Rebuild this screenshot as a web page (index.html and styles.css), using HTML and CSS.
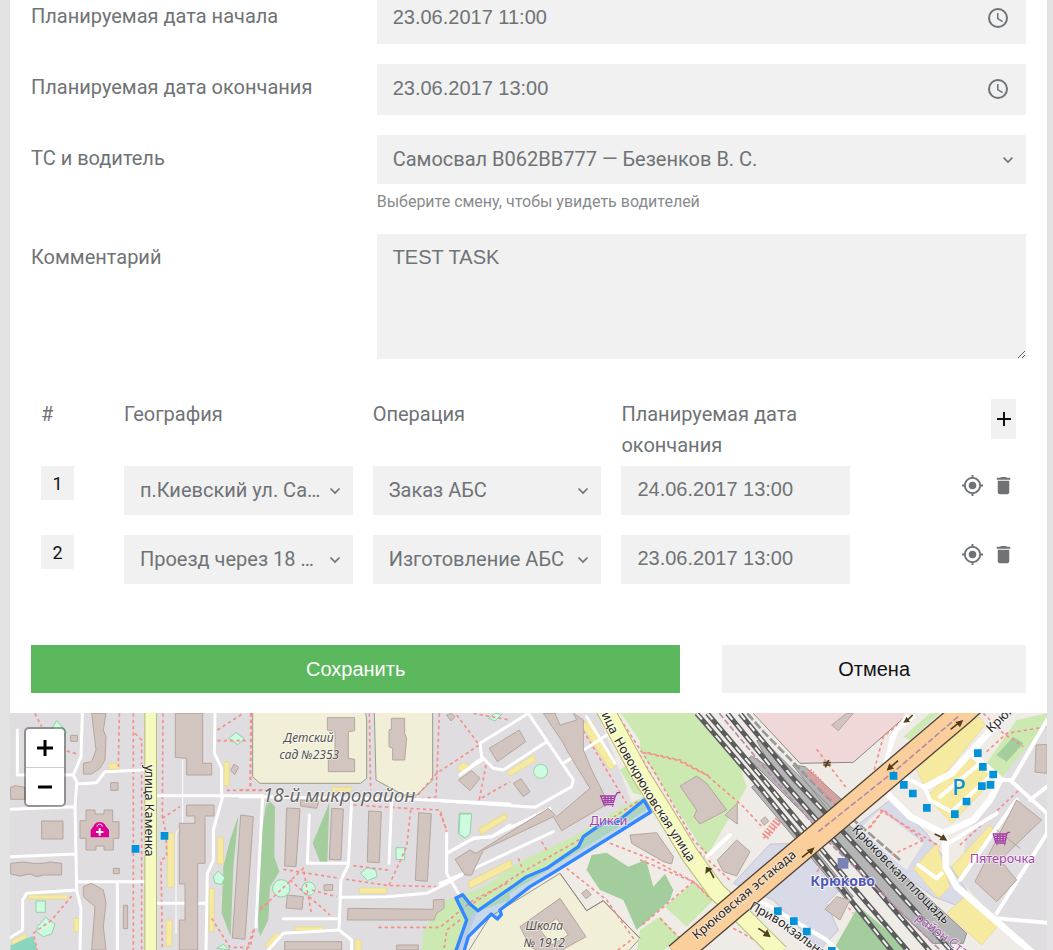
FILE: index.html
```html
<!DOCTYPE html>
<html lang="ru">
<head>
<meta charset="utf-8">
<meta name="viewport" content="width=device-width, initial-scale=1">
<title>Задание</title>
<link rel="stylesheet" href="styles.css">
</head>
<body>
<svg class="sprite" aria-hidden="true">
  <symbol id="i-clock" viewBox="0 0 24 24"><path d="M12 2a10 10 0 1 0 0 20 10 10 0 0 0 0-20zm0 18a8 8 0 1 1 0-16 8 8 0 0 1 0 16zm.5-13H11v6l5.2 3.2.8-1.3-4.5-2.7z"/></symbol>
  <symbol id="i-chevron" viewBox="0 0 12 12"><path d="M1.5 3.5 6 8l4.500-4.500" fill="none" stroke="currentColor" stroke-width="1.700"/></symbol>
  <symbol id="i-target" viewBox="0 0 24 24"><path d="M12 8a4 4 0 1 0 0 8 4 4 0 0 0 0-8zm8.940 3A8.990 8.990 0 0 0 13 3.060V1h-2v2.060A8.990 8.990 0 0 0 3.060 11H1v2h2.060A8.990 8.990 0 0 0 11 20.940V23h2v-2.060A8.990 8.990 0 0 0 20.940 13H23v-2zM12 19a7 7 0 1 1 0-14 7 7 0 0 1 0 14z"/></symbol>
  <symbol id="i-trash" viewBox="0 0 24 24"><path d="M6 19c0 1.100.9 2 2 2h8c1.100 0 2-.9 2-2V7H6zM19 4h-3.500l-1-1h-5l-1 1H5v2h14z"/></symbol>
</svg>
<main class="page">
  <form class="task">
    <div class="row">
      <label class="label" for="start">Планируемая дата начала</label>
      <div class="field">
        <div class="control"><input class="input" id="start" type="text" value="23.06.2017 11:00"><svg class="clock"><use href="#i-clock"/></svg></div>
      </div>
    </div>
    <div class="row">
      <label class="label" for="end">Планируемая дата окончания</label>
      <div class="field">
        <div class="control"><input class="input" id="end" type="text" value="23.06.2017 13:00"><svg class="clock"><use href="#i-clock"/></svg></div>
      </div>
    </div>
    <div class="row">
      <label class="label" for="car">ТС и водитель</label>
      <div class="field">
        <div class="control"><select class="select" id="car"><option>Самосвал B062BB777 — Безенков В. С.</option></select><svg class="chevron"><use href="#i-chevron"/></svg></div>
        <p class="hint">Выберите смену, чтобы увидеть водителей</p>
      </div>
    </div>
    <div class="row">
      <label class="label" for="comment">Комментарий</label>
      <div class="field"><textarea class="textarea" id="comment">TEST TASK</textarea></div>
    </div>

    <table class="steps">
      <thead>
        <tr>
          <th class="col-num" scope="col">#</th>
          <th class="col" scope="col">География</th>
          <th class="col" scope="col">Операция</th>
          <th class="col" scope="col">Планируемая дата окончания</th>
          <th class="col-actions"><button class="add" type="button" aria-label="Добавить"><svg viewBox="0 0 14 14"><path d="M7 0v14M0 7h14"/></svg></button></th>
        </tr>
      </thead>
      <tbody>
        <tr>
          <td><button class="num" type="button">1</button></td>
          <td><div class="control"><select class="select" aria-label="География 1"><option>п.Киевский ул. Са…</option></select><svg class="chevron"><use href="#i-chevron"/></svg></div></td>
          <td><div class="control"><select class="select" aria-label="Операция 1"><option>Заказ АБС</option></select><svg class="chevron"><use href="#i-chevron"/></svg></div></td>
          <td><input class="input input-small" type="text" aria-label="Дата окончания 1" value="24.06.2017 13:00"></td>
          <td><div class="actions"><button class="icon" type="button" aria-label="Показать на карте"><svg><use href="#i-target"/></svg></button><button class="icon" type="button" aria-label="Удалить"><svg><use href="#i-trash"/></svg></button></div></td>
        </tr>
        <tr>
          <td><button class="num" type="button">2</button></td>
          <td><div class="control"><select class="select" aria-label="География 2"><option>Проезд через 18 …</option></select><svg class="chevron"><use href="#i-chevron"/></svg></div></td>
          <td><div class="control"><select class="select" aria-label="Операция 2"><option>Изготовление АБС</option></select><svg class="chevron"><use href="#i-chevron"/></svg></div></td>
          <td><input class="input input-small" type="text" aria-label="Дата окончания 2" value="23.06.2017 13:00"></td>
          <td><div class="actions"><button class="icon" type="button" aria-label="Показать на карте"><svg><use href="#i-target"/></svg></button><button class="icon" type="button" aria-label="Удалить"><svg><use href="#i-trash"/></svg></button></div></td>
        </tr>
      </tbody>
    </table>

    <div class="footer">
      <div class="cell"><button class="btn btn-save" type="submit">Сохранить</button></div>
      <div class="cell"><button class="btn" type="button">Отмена</button></div>
    </div>
  </form>

  <section class="map" aria-label="Карта">
    <svg class="tiles" viewBox="30 2139 3111 711">
      <defs>
        <path id="novo" d="M1800 2100 1920 2322 1985 2425 2070 2565 2150 2675 2220 2740 2340 2860"/>
        <path id="kam" d="M452 2100V2860"/>
        <path id="est" d="M2030 2866 2400 2552 2885 2140 2930 2100"/>
        <path id="t-novo" d="M1766 2066 1842 2222 1935 2385 2100 2640"/>
        <path id="t-pl" d="M2554 2490 2660 2600 2830 2770"/>
        <path id="t-priv" d="M2246 2726 2330 2772 2450 2860 2500 2900"/>
      </defs>

      <rect class="land" x="30" y="2139" width="3111" height="711"/>

      <!-- land cover -->
      <path class="city" d="M1790 2130H3141V2860H1380L1430 2740 1900 2420z"/>
      <path class="land" d="M3141 2165 3060 2230 3010 2340 2900 2500 2880 2640 3080 2860H3141z"/>
      <g transform="translate(0 2100)">
        <path class="wood" d="M715 348 690 420 670 500 665 640 692 710 700 500zM800 300 785 400 775 700 805 640z"/>
        <path class="play" d="M170 62l30 35-15 18-32-25zM686 115l22-17 25 18-20 18zM108 603h28v34h-28zM112 680l25-28 28 20-10 30-25 8-20-15zM640 530l15-17 20 20-10 20-20-3zM650 745l20-12 20 17z"/>
        <path class="teal" d="M32 735 98 708 112 750H32z"/>
        <path class="parking" d="M326 190h32v18h-32zM85 585h118v12H85zM222 655h15v40h-15zM502 400h20v162h-20zM498 660h18v78h-18zM672 185h15v72h-15zM652 412h18v80h-18zM628 565h14v130h-14zM35 722l42-22 3 12-42 22z"/>
      </g>
      <g transform="translate(720 2100)">
        <path class="school" d="M38 0H372L380 60V235L362 250H60L38 230zM402 0H578V240L530 285H490L408 240z"/>
        <path class="wood" d="M85 300 105 320 103 470 118 515 90 560 85 660 60 710 52 640 65 400zM268 308 218 430 240 485 262 488z"/>
        <path class="park" d="M545 760 550 690 620 600 780 545 810 560V600L700 640 640 760z"/>
        <path class="play" d="M658 340h35l-5 60-15 12-18-12zM362 520l20-18 25 8 5 20-30 12zM468 443h26v36h-26z"/>
        <circle class="play" cx="124" cy="565" r="26"/><circle class="play" cx="206" cy="566" r="20"/>
        <path class="parking" d="M275 262h60v12h-60zM358 564h82v17h-82zM165 680h85v12h-85zM75 735l35-38 10 8-33 38zM345 720h18v40h-18zM650 205l20-18 18 10-22 20zM715 385l80-45 8 15-80 50zM685 545l130-65v22l-128 65z"/>
      </g>
      <g transform="translate(1320 2100)">
        <path class="park" d="M85 590 250 480 400 410 540 325 610 290 620 330 110 640zM540 210 560 195 605 285 580 280zM535 30H760L900 200 920 260 800 470 620 150z"/>
        <path class="school" d="M75 770 150 650 360 520 440 632 490 602 600 715 550 770z"/>
        <path class="wood" d="M440 510 455 465 500 458 565 500 618 480 640 560 675 522 700 570 690 600 590 690 550 600 480 570z"/>
        <path class="park" d="M675 620 760 548 820 600 740 680zM600 690 660 650 720 715 660 760H590z"/>
        <path class="play" d="M60 342h35l-5 60-15 12-18-12zM145 55l20-15 20 3-20 20z"/><circle class="play" cx="302" cy="214" r="21"/>
        <path class="parking" d="M202 215 280 165 288 182 210 228zM420 70 455 62 525 200 510 210zM118 388 195 342 202 355 125 402zM85 545 210 480 218 500 90 565z"/>
        <path class="line" d="M360 520 440 632 490 602 600 715"/>
      </g>
      <g transform="translate(1920 2100)">
        <path class="park" d="M0 30H165L320 260 200 470 0 150z"/>
        <path class="retail" d="M335 30H800L780 65 640 187 480 190z"/>
        <path class="line" d="M340 40 480 190 640 187 790 55"/>
        <path class="zone" d="M390 432 280 550 400 600 540 750 595 690 560 610 600 570 480 430zM620 400 750 300 860 400 980 570 960 620 880 590z"/>
        <path class="wood" d="M655 618 810 750H580z"/>
      </g>
      <g transform="translate(2400 2100)">
        <path class="city" d="M180 385 240 330 370 430 320 510 270 470z"/>
        <path class="park" d="M310 110 390 40H420L330 120zM560 190 650 60 741 40 740 70 640 190 610 230z"/>
        <path class="wood" d="M590 165 640 110 670 130 620 185z"/>
        <path class="parking" d="M350 210 480 80 540 50 555 75 420 240 375 262zM380 290 500 170 570 210 570 250 455 370zM340 505 410 430 450 560 415 595zM440 640 500 585 592 680 545 735zM455 500 570 375 585 395 480 540z"/>
      </g>

      <!-- railway -->
      <g transform="translate(1920 2100)">
        <path class="platform" d="M350 122 372 122 600 350 980 700 970 730 880 730 700 560 500 350 325 175 335 168 400 210zM335 262 350 250 520 440 640 590 620 600zM458 195 495 200 640 330 580 350z"/>
        <g class="rail">
          <path d="M170 40 350 250 600 560 760 760"/><path d="M202 40 380 250 630 550 810 760"/>
          <path d="M262 40 430 245 660 510 875 760"/><path d="M300 40 460 235 720 515 940 760"/>
        </g>
        <g class="rail-gap">
          <path d="M170 40 350 250 600 560 760 760"/><path d="M202 40 380 250 630 550 810 760"/>
          <path d="M262 40 430 245 660 510 875 760"/><path d="M300 40 460 235 720 515 940 760"/>
        </g>
        <path class="side-track" d="M322 40 370 95 560 290 780 480"/>
        <path class="border" d="M238 40 400 235 570 430 900 750"/>
      </g>

      <!-- footpaths -->
      <g class="foot">
        <g transform="translate(0 2100)">
          <path d="M105 40 125 80M358 40 355 200M400 40V750M405 100 425 120V750M489 40 487 350 498 400 500 470 483 480 487 750M487 355 540 320M652 90 730 40M652 122H745M752 40V268M680 271H800M635 655 690 742H750L765 680M215 588 155 660 100 700 112 750M200 153 235 163M780 625 810 605"/>
        </g>
        <g transform="translate(720 2100)">
          <path d="M35 40 30 268M0 270H70M388 40 392 270M598 40 588 290 520 300M650 45 718 135 590 220 525 295M700 40 810 60M738 195 718 298 810 245M340 315 500 325 600 330 620 395M512 330 500 440 445 560M130 508 300 535 440 556 590 560M340 497 445 510M60 630 190 505 215 645M150 540 270 645M215 570 290 590M415 682H600L700 600 810 545M660 660 620 690 612 750M40 690 20 750"/>
        </g>
        <g transform="translate(1320 2100)">
          <path d="M420 75 500 210 560 310M530 40 640 210 760 420 810 470M622 158 720 180 810 230M100 610 240 520 400 430 600 300M510 430 640 480 760 545 810 590M380 505 500 600 580 715 520 760M760 545 600 680M660 655 725 720M305 425 320 450M235 475 245 500M0 340 20 390"/>
        </g>
        <g transform="translate(1920 2100)">
          <path d="M10 158 110 180 200 225 310 320 370 385M0 165 150 430 275 545M0 480 160 545 215 600M530 148 620 265M790 60 730 110 700 220M685 385 730 330 850 420M730 330 685 390M850 420 755 465M600 595 640 640M530 515 545 500M280 685 400 750M370 415 425 365"/>
        </g>
        <g transform="translate(2400 2100)"><path d="M550 40 610 100 670 140M560 155 620 100 741 80M480 435 655 272M240 330 420 440"/></g>
      </g>
      <g transform="translate(1920 2100)"><path class="steps-path" d="M505 215 590 305M375 410 415 360"/></g>

      <!-- local roads -->
      <g class="road">
        <g transform="translate(0 2100)">
          <path d="M247 40 243 170 220 225 233 252 290 248 315 215 430 210M52 90V225H220M230 250 225 320 32 328M225 320 230 570 80 580 68 600V690L32 712M32 470 225 462M230 545H435M352 545V750M230 570 243 625 240 750M645 40 643 160 665 205V290M470 287H790M668 290 640 390V480L622 520 618 750M470 610H615"/>
          <path d="M548 180V370L528 400V700" stroke-width="3"/>
        </g>
        <g transform="translate(720 2100)">
          <path d="M0 290H65L520 298 810 312M68 290 48 680M335 300 325 495 303 540 297 690 130 700 85 750M208 345 202 490H325M455 300 447 490M130 656H297M297 690 335 720V750M300 592 440 590 560 580 630 545 665 525M620 400V520L655 580M620 460 700 415 755 410 810 375M665 220 730 178"/>
        </g>
        <g transform="translate(1320 2100)">
          <path d="M0 302 285 322 395 260 400 240 265 40 120 130 125 170 160 205 190 210 320 125M370 190 500 105M440 50 525 190M60 225 120 178M0 550 60 525 340 395M20 460 100 415 155 410 330 325"/>
        </g>
        <g transform="translate(1920 2100)">
          <path d="M800 50 755 110 735 215M200 470 270 405M340 590 560 720 600 760" stroke-width="12"/>
        </g>
        <g transform="translate(2400 2100)">
          <path d="M340 50 290 90 255 190M250 200 330 240 375 262 455 220 600 60M270 290 330 350 430 400 520 360 570 300 600 240 520 165M430 440 590 340M437 420V500L470 560 700 760M600 240 630 240 741 340V400L590 640M590 655 741 668M640 235 741 60M690 300 741 260M375 265 390 300 455 335 575 225M355 495 410 535 425 520M420 290 540 190M480 540 650 300" stroke-width="12"/>
          <path d="M250 270 330 350 430 400 520 360 570 300 600 240 520 165M437 420V500L470 560 700 760M375 262 455 220 600 60" stroke-width="20"/>
        </g>
      </g>

      <!-- buildings -->
      <g class="bld">
        <g transform="translate(0 2100)">
          <path d="M275 40H318L310 90 318 110 315 180 300 205 275 222H250V190L275 185 288 150zM526 40H608V190H635V225H560V175L526 172zM212 106h20v18h-20zM332 248h22v23h-22zM32 262 45 257 75 262V298H32zM125 363h64v54h-64zM258 330 285 330V342H312V330H338V365H357V415H340V450H312V438H288V450H258V415H240V362H258zM32 490 70 486 100 490 130 490 150 486 185 490V525H130L110 530 90 522 60 528 32 522zM340 505h18v16h-18zM250 560 275 550 310 570 318 610 310 680 318 750H275L285 620 250 590zM370 616h13v70h-13zM560 315H642V348H615V490H593V750H538V660H555V552H538V370H585V348H560zM722 345 760 350 735 718 697 714zM702 192l14 10-12 22-12-12z"/>
        </g>
        <g transform="translate(720 2100)">
          <path d="M262 53H344V92L325 95V175L344 178V215H265V178L285 170V95L262 90zM454 55H494V100L500 115 494 180H458V145L447 140V90L454 88zM140 324 180 326 168 500 134 498zM182 300 236 305 230 325 182 318zM275 325 310 327 303 480 268 478zM386 333 424 335 418 488 382 486zM536 338 574 341 562 544 526 541zM142 585 190 590 186 628 138 624zM252 555 278 553V571H252zM324 625 580 628V600L612 598V625L590 640 582 660H322zM134 725H305V750H134zM470 735H535V750H470zM620 45l15-5 10 10-12 13zM655 240 695 212 720 235 690 272z"/>
        </g>
        <g transform="translate(1320 2100)">
          <path d="M148 145 238 90 257 125 172 185zM220 250 243 236 270 275 250 290zM310 40 345 40 360 75 410 60 400 40 430 60 430 150 455 210 505 310 365 392 340 350 130 450 95 525 75 525 45 478 90 450 108 460 325 325 350 350 450 265 410 200 380 150 370 130zM570 405 650 398 700 470 695 492 670 485 575 430zM720 258 770 228 800 250 860 330 780 372 762 350 770 330zM425 580l15-12 14 16-16 12z"/>
          <path fill-rule="evenodd" d="M240 680 360 595 438 710 330 770 270 740zM300 690 350 655 385 705 335 735z"/>
        </g>
        <g transform="translate(1920 2100)">
          <path d="M255 345 292 310 292 372zM232 480 290 420 330 455 290 528 250 515zM362 362l14-12 10 14-14 12zM575 75 620 40H640L595 92zM555 628 590 590 630 600 600 660z"/>
        </g>
        <g transform="translate(2400 2100)"><path d="M525 545 650 300 725 360 600 480 650 540 590 605zM708 135 741 133V220L705 216zM590 390 660 445"/></g>
      </g>

      <!-- main roads -->
      <use class="yellow-case" href="#kam" stroke-width="38"/><use class="yellow" href="#kam" stroke-width="32"/>
      <use class="yellow-case" href="#novo" stroke-width="56"/><use class="yellow" href="#novo" stroke-width="50"/>
      <use class="orange-case" href="#est"/><use class="orange" href="#est"/>
      <path class="border" d="M2455 2495 2700 2300 2880 2145"/>
      <g class="arrow">
        <path d="M2406 2572 2436 2548M2694 2282 2664 2308M2852 2188 2882 2164M2142 2634 2128 2608M2275 2785 2305 2805M2804 2502 2838 2518M2738 2145 2718 2165"/>
        <path class="head" d="M2444 2542 2420 2550 2434 2564zM2660 2312 2682 2306 2668 2290zM2890 2160 2866 2166 2880 2182zM2118 2600 2138 2606 2116 2622zM2312 2812 2288 2808 2302 2788zM2842 2522 2818 2520 2830 2502zM2710 2168 2730 2166 2720 2150z"/>
        <path d="M2470 2288H2492M2470 2295H2492M2486 2280 2476 2302" stroke-width="3"/>
      </g>

      <!-- selected route area -->
      <path class="route" d="M1365 2860 1400 2760 1368 2694 1388 2684 1410 2712 1434 2732 1580 2630 1640 2605 1735 2540 1750 2510 1815 2465 1846 2470 1932 2400 1952 2436 1665 2615 1590 2660 1500 2730 1504 2744 1492 2757 1474 2742 1405 2810 1390 2860z"/>

      <!-- markers -->
      <g class="stop">
        <path d="M482 2496h23v23h-23zM395 2535h23v23h-23zM2322 2722h23v23h-23zM2370 2752h23v23h-23zM2409 2783h23v23h-23zM2484 2841h23v23h-23zM2922 2248h23v23h-23zM2937 2289h23v23h-23zM2968 2312h23v23h-23zM2960 2343h23v23h-23zM2934 2347h23v23h-23zM2888 2393h23v23h-23zM2853 2431h23v23h-23zM2669 2316h23v23h-23zM2700 2343h23v23h-23zM2727 2369h23v23h-23zM2769 2412h23v23h-23z"/>
      </g>
      <path class="station" d="M2513 2574h32v32h-32z"/>
      <path class="clinic" d="M272 2512V2490L281 2478C286 2462 312 2462 317 2478L327 2490V2512z"/>
      <path class="cross" d="M299 2485V2507M288 2496H310"/>
      <path class="handle" d="M291 2480C291 2470 307 2470 307 2480"/>
      <g class="cart">
        <g transform="translate(1800 2378)"><path d="M2 10H46L40 30H10zM46 10 52 0H60M10 30 12 36H42M8 17H44M10 24H42M15 10V30M24 10V30M33 10V30"/><circle cx="15" cy="40" r="2"/><circle cx="38" cy="40" r="2"/></g>
        <g transform="translate(2978 2498)"><path d="M2 4H42L38 25H8zM42 4 46-1H52M8 25 10 31H40M6 11H41M8 18H39M14 4V25M22 4V25M31 4V25"/><circle cx="13" cy="36" r="2"/><circle cx="36" cy="36" r="2"/></g>
      </g>

      <!-- place names -->
      <g class="name">
        <text transform="translate(436 2294) rotate(90)">улица Каменка</text>
        <text><textPath href="#t-novo" startOffset="46">улица</textPath></text>
        <text><textPath href="#t-novo" startOffset="172">Новокрюковская улица</textPath></text>
        <text transform="translate(2090 2820) rotate(-40)">Крюковская эстакада</text>
        <text><textPath href="#t-pl">Крюковская площадь</textPath></text>
        <text><textPath href="#t-priv">Привокзальная</textPath></text>
        <text transform="translate(2974 2200) rotate(-44)">Крюковская</text>
        <g class="italic">
          <text x="926" y="2225">Детский</text><text x="928" y="2277">сад №2353</text>
          <text x="1633" y="2790">Школа</text><text x="1633" y="2842">№ 1912</text>
          <text class="district" x="1017" y="2405">18-й микрорайон</text>
        </g>
        <text class="rail-name" x="2528" y="2659">Крюково</text>
        <text class="shop" x="3007" y="2590">Пятерочка</text>
        <text class="shop" x="1826" y="2475">Дикси</text>
        <text class="shop-path" transform="translate(2744 2758) rotate(37)">район Станция</text>
        <text class="park-sign" x="2877" y="2386">P</text>
      </g>
    </svg>
    <div class="zoom">
      <button class="zoom-btn" type="button" aria-label="Приблизить"><svg viewBox="0 0 16 16"><path d="M8 0v16M0 8h16"/></svg></button>
      <button class="zoom-btn" type="button" aria-label="Отдалить"><svg viewBox="0 0 16 16"><path d="M1 8h14"/></svg></button>
    </div>
  </section>
</main>
</body>
</html>
```
FILE: styles.css
```css
*, *::before, *::after { box-sizing: border-box; }
html { overflow: hidden; }
body {
  margin: 0;
  background: #e3e3e3;
  color: #6f7376;
  font: 20px/31px Roboto, "Noto Sans", sans-serif;
}
button, input, select, textarea { font: inherit; color: inherit; border: 0; border-radius: 0; margin: 0; }
.sprite { position: absolute; width: 0; height: 0; }

/* the form is shown scrolled, its first row slightly cut */
.page { margin: -7px 6px 0 10px; background: #fff; }
.task { padding-bottom: 20px; }
.row { display: grid; grid-template-columns: 1fr 2fr; margin-bottom: 20px; }
.label { padding: 8px 21px 0; }
.field { padding: 0 21px; min-width: 0; }
.control { position: relative; }
.input, .select, .textarea { display: block; width: 100%; background: #f1f1f1; padding: 0 16px; }
.input, .textarea, .btn { font-family: "Liberation Sans", Arial, sans-serif; }
.input { height: 51px; padding-bottom: 2px; }
.input-small, .select { height: 49px; }
.select { appearance: none; padding-right: 28px; text-overflow: ellipsis; }
.textarea { height: 125px; padding-top: 8px; resize: vertical; }
.clock, .chevron { position: absolute; top: 50%; transform: translateY(-50%); fill: currentColor; pointer-events: none; }
.clock { right: 16px; width: 24px; height: 24px; margin-top: -1px; }
.chevron { right: 12px; width: 12px; height: 12px; }
.hint { margin: 5px 0 0; font-size: 16px; line-height: 25px; color: #888b8e; }

.steps { width: calc(100% - 42px); margin: 40px 21px 0; table-layout: fixed; border-collapse: collapse; }
.steps th { padding: 0 10px 5px; font-weight: 400; text-align: left; vertical-align: top; }
.steps td { padding: 0 10px 20px; vertical-align: top; }
.col-num { width: 8.333%; }
.col { width: 25%; }
.add { display: grid; place-items: center; width: 25px; height: 40px; margin-left: auto; padding: 0; background: #f1f1f1; color: #111; }
.add svg { width: 14px; height: 14px; stroke: currentColor; stroke-width: 2; }
.num { display: block; width: 33px; height: 34px; padding: 0; background: #f1f1f1; color: #111; font-size: 18px; }
.actions { display: flex; justify-content: flex-end; gap: 8px; padding: 8px 1px 0 0; }
.icon { display: block; width: 23px; height: 23px; padding: 0; background: none; }
.icon svg { display: block; width: 23px; height: 23px; fill: currentColor; }

.footer { display: grid; grid-template-columns: 2fr 1fr; margin-top: 41px; }
.cell { padding: 0 21px; }
.btn { display: block; width: 100%; height: 48px; padding: 0; background: #f1f1f1; color: #111; }
.btn-save { background: #5cb85c; color: #fff; }

.map { position: relative; }
.tiles { display: block; width: 100%; }
.zoom { position: absolute; top: 14px; left: 14px; border: 2px solid rgba(0, 0, 0, .35); border-radius: 5px; background: #fff; background-clip: padding-box; }
.zoom-btn { display: grid; place-items: center; width: 38px; height: 38px; padding: 0; background: none; color: #000; }
.zoom-btn + .zoom-btn { border-top: 1px solid #ccc; }
.zoom-btn svg { width: 16px; height: 16px; stroke: currentColor; stroke-width: 3; }

.tiles path, .tiles use { fill: none; }
.tiles .land { fill: #dfdddf; }
.tiles .city { fill: #efebe6; }
.tiles .wood { fill: #a3cd9c; }
.tiles .park { fill: #cbe9b0; }
.tiles .school { fill: #f1efd8; stroke: #9c9b84; stroke-width: 3; }
.tiles .play { fill: #ccfbdf; stroke: #94d0a8; stroke-width: 3; }
.tiles .teal { fill: #89d5bd; }
.tiles .parking { fill: #f6eaa0; stroke: #e6d78c; stroke-width: 2; }
.tiles .retail { fill: #f0d8d8; }
.tiles .zone { fill: #d9dae8; stroke: #b5b6c8; stroke-width: 2; }
.tiles .line { stroke: #8d8880; stroke-width: 3; }
.tiles .platform { fill: #b5b5b5; stroke: #8e8e8e; stroke-width: 3; }
.rail path { stroke: #5c5c5c; stroke-width: 15; }
.rail-gap path { stroke: #f4f4f4; stroke-width: 6; stroke-dasharray: 24 20; }
.side-track { stroke: #999; stroke-width: 8; stroke-dasharray: 26 8; }
.tiles .border { stroke: #b58bac; stroke-width: 5; stroke-dasharray: 18 7; }
.foot path { stroke: #f58f8c; stroke-width: 5; stroke-dasharray: 10 9; }
.tiles .steps-path { stroke: #f58f8c; stroke-width: 24; stroke-dasharray: 5 5; }
.road path { stroke: #fff; stroke-linejoin: round; stroke-linecap: round; }
.road path:not([stroke-width]) { stroke-width: 9; }
.bld path { fill: #d2c5bf; stroke: #b5a69e; stroke-width: 3; }
.yellow-case { stroke: #b7bd78; }
.yellow { stroke: #f7fabf; }
.orange-case { stroke: #4f4438; stroke-width: 76; }
.orange { stroke: #fbcf9c; stroke-width: 68; }
.arrow path { stroke: #50401c; stroke-width: 5; }
.arrow .head { fill: #50401c; stroke: none; }
.tiles .route { fill: rgba(51, 136, 255, .2); stroke: #3388ff; stroke-width: 10; stroke-linejoin: round; }
.stop path { fill: #0092da; }
.tiles .station { fill: #7981b5; }
.tiles .clinic { fill: #da0092; }
.tiles .cross { stroke: #fff; stroke-width: 6; }
.tiles .handle { stroke: #fff; stroke-width: 3; }
.cart path { stroke: #a63caa; stroke-width: 4; }
.cart circle { fill: #a63caa; }

.name { font-family: "Noto Sans", sans-serif; font-size: 38px; }
.name text { fill: #252525; stroke: rgba(255, 255, 255, .6); stroke-width: 5; paint-order: stroke; }
.italic text { font-style: italic; text-anchor: middle; fill: #54504c; font-size: 36px; }
.italic .district { font-size: 57px; fill: #666; }
.name .rail-name { fill: #5058b8; font-weight: 700; font-size: 42px; text-anchor: middle; stroke: #fff; }
.name .shop { fill: #a344ab; text-anchor: middle; }
.name .shop-path { fill: #a959b0; }
.name .park-sign { fill: #0092da; font-size: 66px; text-anchor: middle; stroke: none; font-weight: 500; }
```
